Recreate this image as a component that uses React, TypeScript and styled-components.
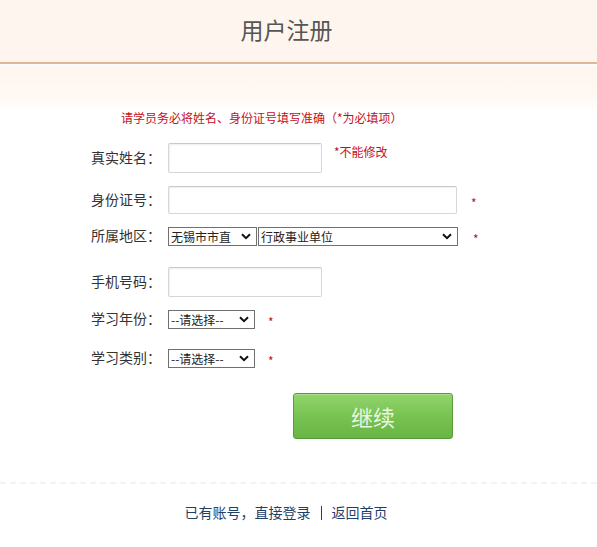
import React from "react";
import styled, { createGlobalStyle } from "styled-components";

const Global = createGlobalStyle`
  html, body { margin: 0; padding: 0; background: #fff; }
  body { font-family: "Noto Sans CJK SC", "Noto Sans", sans-serif; color: #333; }
`;

const Page = styled.div`
  width: 597px;
  height: 547px;
  background: #fff;
  display: flex;
  flex-direction: column;
`;

const Header = styled.header`
  height: 64px;
  box-sizing: border-box;
  background: #fef5ef;
  border-bottom: 2px solid #e3b796;
  display: flex;
  align-items: center;
  justify-content: center;
  padding: 0 24px 4px 0;
`;

const Title = styled.h1`
  margin: 0;
  font-size: 23px;
  font-weight: normal;
  color: #555;
`;

const Band = styled.div`
  height: 42px;
  border-top: 2px solid #fbfaff;
  background: linear-gradient(#fff6ee, #fff9f5 70%, #fffdfb);
`;

const Notice = styled.p`
  margin: 2px 0 0 121px;
  font-size: 12px;
  line-height: 16px;
  color: #c4101a;
`;

const Form = styled.div`
  display: flex;
  flex-direction: column;
  padding-left: 91px;
`;

const Row = styled.div<{ $mt: number }>`
  display: flex;
  align-items: center;
  height: 30px;
  margin-top: ${(p) => p.$mt}px;
`;

const Label = styled.span`
  width: 77px;
  font-size: 14px;
  color: #333;
  line-height: 18px;
  padding-bottom: 3px;
`;

const Input = styled.input<{ $w: number; $h: number }>`
  box-sizing: border-box;
  width: ${(p) => p.$w}px;
  height: ${(p) => p.$h}px;
  border: 1px solid #d6d6d6;
  border-top-color: #c8c8c8;
  border-radius: 2px;
  box-shadow: inset 1px 1px 2px #eee;
  background: #fff;
  margin: 0;
  padding: 0 4px;
  outline: none;
`;

const SelectBox = styled.div<{ $w: number }>`
  position: relative;
  width: ${(p) => p.$w}px;
  height: 19px;
  margin-right: 1px;
  display: flex;
`;

const Select = styled.select`
  appearance: none;
  -webkit-appearance: none;
  box-sizing: border-box;
  width: 100%;
  height: 19px;
  margin: 0;
  padding: 0 0 0 2px;
  font-family: "Noto Sans CJK SC", sans-serif;
  font-size: 12px;
  line-height: 17px;
  color: #222;
  border: 1px solid #707070;
  border-radius: 0;
  background: #fff;
  outline: none;
`;

const Chevron = styled.svg`
  position: absolute;
  right: 6px;
  top: 6px;
  width: 10px;
  height: 7px;
  pointer-events: none;
`;

const Star = styled.span<{ $ml: number }>`
  margin-left: ${(p) => p.$ml}px;
  font-size: 12px;
  color: #c4101a;
  padding-top: 4px;
`;

const Hint = styled.span`
  align-self: flex-start;
  margin-left: 12px;
  margin-top: 0;
  font-size: 12px;
  color: #c4101a;
`;

const ButtonWrap = styled.div`
  display: flex;
  padding-left: 293px;
  margin-top: 20px;
`;

const Button = styled.button`
  box-sizing: border-box;
  width: 160px;
  height: 46px;
  border: 1px solid #5a9c3c;
  border-radius: 3px;
  background: linear-gradient(#93d46e, #78c352 50%, #69b545);
  color: #eaf6e2;
  font-family: "Noto Sans CJK SC", sans-serif;
  font-size: 22px;
  padding: 0;
  box-shadow: inset 0 1px 0 #a8de88;
`;

const Footer = styled.footer`
  margin-top: 43px;
  border-top: 2px dashed #f3f3f3;
  display: flex;
  justify-content: center;
  align-items: center;
  gap: 10px;
  padding-top: 18px;
  padding-right: 25px;
  font-size: 14px;
  color: #1f3f6b;
`;

const Link = styled.a`
  color: #1f3f6b;
  text-decoration: none;
`;

const Sep = styled.span`
  width: 1px;
  height: 14px;
  margin-top: 2px;
  background: #1f3f6b;
`;

function Dropdown({ w, value }: { w: number; value: string }) {
  return (
    <SelectBox $w={w}>
      <Select defaultValue={value}>
        <option value={value}>{value}</option>
      </Select>
      <Chevron viewBox="0 0 10 7">
        <path d="M1 1.2 L5 5.2 L9 1.2" fill="none" stroke="#111" strokeWidth="2" />
      </Chevron>
    </SelectBox>
  );
}

export default function App() {
  return (
    <Page>
      <Global />
      <Header>
        <Title>用户注册</Title>
      </Header>
      <Band />
      <Notice>请学员务必将姓名、身份证号填写准确（*为必填项）</Notice>
      <Form>
        <Row $mt={17}>
          <Label>真实姓名：</Label>
          <Input $w={154} $h={30} />
          <Hint>*不能修改</Hint>
        </Row>
        <Row $mt={12}>
          <Label>身份证号：</Label>
          <Input $w={289} $h={28} />
          <Star $ml={14}>*</Star>
        </Row>
        <Row $mt={6}>
          <Label>所属地区：</Label>
          <Dropdown w={89} value="无锡市市直" />
          <Dropdown w={200} value="行政事业单位" />
          <Star $ml={14}>*</Star>
        </Row>
        <Row $mt={16}>
          <Label>手机号码：</Label>
          <Input $w={154} $h={30} />
        </Row>
        <Row $mt={7}>
          <Label>学习年份：</Label>
          <Dropdown w={87} value="--请选择--" />
          <Star $ml={12}>*</Star>
        </Row>
        <Row $mt={9}>
          <Label>学习类别：</Label>
          <Dropdown w={87} value="--请选择--" />
          <Star $ml={12}>*</Star>
        </Row>
      </Form>
      <ButtonWrap>
        <Button>继续</Button>
      </ButtonWrap>
      <Footer>
        <Link href="#">已有账号，直接登录</Link>
        <Sep />
        <Link href="#">返回首页</Link>
      </Footer>
    </Page>
  );
}
